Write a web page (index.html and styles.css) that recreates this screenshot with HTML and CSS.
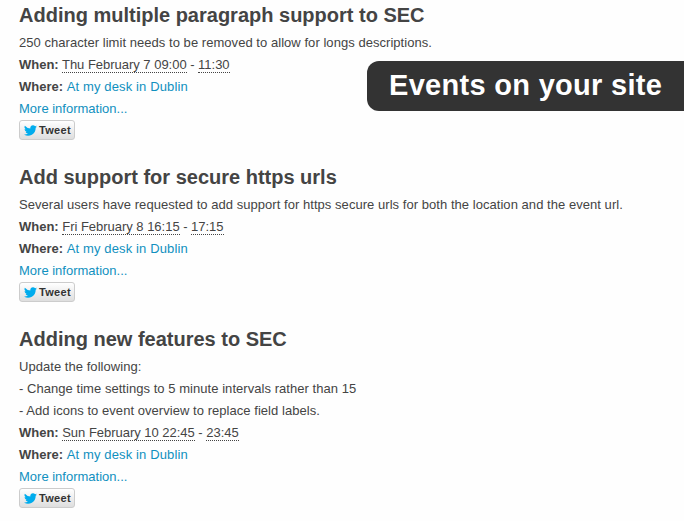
FILE: index.html
```html
<!DOCTYPE html>
<html lang="en">

<head>
  <meta charset="utf-8">
  <title>Events</title>
  <link rel="stylesheet" href="styles.css">
</head>

<body>
  <svg class="sprite">
    <symbol id="bird" viewBox="0 0 24 24">
      <path d="M24 4.6a10 10 0 0 1-2.8.8 5 5 0 0 0 2.1-2.7 10 10 0 0 1-3.1 1.2 4.9 4.9 0 0 0-8.4 4.5A14 14 0 0 1 1.7 3.2a4.9 4.9 0 0 0 1.5 6.5 4.9 4.9 0 0 1-2.2-.6 4.9 4.9 0 0 0 3.9 4.9 5 5 0 0 1-2.2.1 4.9 4.9 0 0 0 4.6 3.4A9.9 9.9 0 0 1 0 19.5 14 14 0 0 0 21.5 7.1 10 10 0 0 0 24 4.6z"/>
    </symbol>
  </svg>

  <div class="events">
    <div class="event">
      <h2>Adding multiple paragraph support to SEC</h2>
      <p class="description">250 character limit needs to be removed to allow for longs descriptions.</p>
      <p class="when"><strong>When:</strong> <abbr>Thu February 7 09:00</abbr> - <abbr>11:30</abbr></p>
      <p class="where"><strong>Where:</strong> <a href="#">At my desk in Dublin</a></p>
      <p class="more"><a href="#">More information...</a></p>
      <a class="tweet" href="#"><svg class="bird"><use href="#bird"/></svg><span>Tweet</span></a>
    </div>

    <div class="event">
      <h2>Add support for secure https urls</h2>
      <p class="description">Several users have requested to add support for https secure urls for both the location and the event url.</p>
      <p class="when"><strong>When:</strong> <abbr>Fri February 8 16:15</abbr> - <abbr>17:15</abbr></p>
      <p class="where"><strong>Where:</strong> <a href="#">At my desk in Dublin</a></p>
      <p class="more"><a href="#">More information...</a></p>
      <a class="tweet" href="#"><svg class="bird"><use href="#bird"/></svg><span>Tweet</span></a>
    </div>

    <div class="event">
      <h2>Adding new features to SEC</h2>
      <p class="description">Update the following:<br>- Change time settings to 5 minute intervals rather than 15<br>- Add icons to event overview to replace field labels.</p>
      <p class="when"><strong>When:</strong> <abbr>Sun February 10 22:45</abbr> - <abbr>23:45</abbr></p>
      <p class="where"><strong>Where:</strong> <a href="#">At my desk in Dublin</a></p>
      <p class="more"><a href="#">More information...</a></p>
      <a class="tweet" href="#"><svg class="bird"><use href="#bird"/></svg><span>Tweet</span></a>
    </div>
  </div>

  <div class="banner">Events on your site</div>
</body>

</html>
```

FILE: styles.css
```css
body {
  margin: 0;
  background-color: #fefefe;
  color: #444;
  font-family: "Liberation Sans", Arial, sans-serif;
  font-size: 13px;
  line-height: 22px;
  overflow: hidden;
}

.sprite {
  display: none;
}

.events {
  display: flex;
  flex-direction: column;
  gap: 22px;
  padding-left: 19px;
}

.event {
  display: flex;
  flex-direction: column;
  align-items: flex-start;
}

h2 {
  margin: 0;
  padding: 2px 0 4px;
  font-size: 20px;
  line-height: 26px;
}

p {
  margin: 0;
  white-space: nowrap;
}

.description {
  letter-spacing: 0.045px;
}

.when {
  letter-spacing: -0.02px;
}

.where a {
  letter-spacing: 0.13px;
}

a {
  color: #1090bf;
  text-decoration: none;
}

abbr {
  border-bottom: 1px dotted #444;
}

.tweet {
  display: flex;
  align-items: center;
  box-sizing: border-box;
  width: 56px;
  height: 20px;
  padding-left: 4px;
  gap: 2px;
  border: 1px solid #ccc;
  border-radius: 3px;
  background: linear-gradient(#fff, #dedede);
  color: #333;
  font-size: 11px;
  font-weight: bold;
  line-height: 18px;
  letter-spacing: 0.3px;
}

.bird {
  width: 13px;
  height: 13px;
  fill: #00aced;
}

.banner {
  position: absolute;
  top: 61px;
  right: 0;
  box-sizing: border-box;
  width: 317px;
  height: 50px;
  padding-left: 22px;
  border-radius: 12px 0 0 12px;
  background-color: #333;
  color: #fff;
  font-size: 29px;
  font-weight: bold;
  line-height: 49px;
  letter-spacing: 0.3px;
  white-space: nowrap;
}
```
